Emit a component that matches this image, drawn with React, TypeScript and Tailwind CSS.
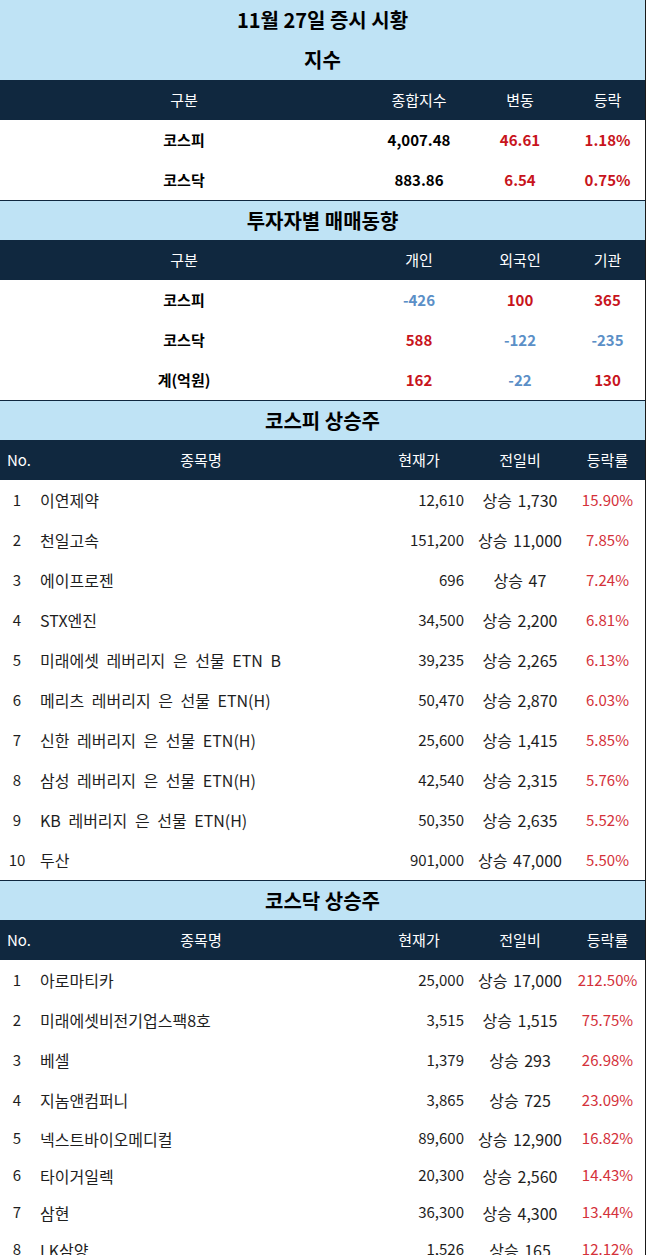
const cols = "grid grid-cols-[34px_334px_102px_100px_75px]";

const indexRows = [
  { name: "코스피", value: "4,007.48", change: "46.61", rate: "1.18%" },
  { name: "코스닥", value: "883.86", change: "6.54", rate: "0.75%" },
];

const investorRows = [
  { name: "코스피", a: "-426", b: "100", c: "365" },
  { name: "코스닥", a: "588", b: "-122", c: "-235" },
  { name: "계(억원)", a: "162", b: "-22", c: "130" },
];

const kospiRows = [
  ["이연제약", "12,610", "상승 1,730", "15.90%"],
  ["천일고속", "151,200", "상승 11,000", "7.85%"],
  ["에이프로젠", "696", "상승 47", "7.24%"],
  ["STX엔진", "34,500", "상승 2,200", "6.81%"],
  ["미래에셋 레버리지 은 선물 ETN B", "39,235", "상승 2,265", "6.13%"],
  ["메리츠 레버리지 은 선물 ETN(H)", "50,470", "상승 2,870", "6.03%"],
  ["신한 레버리지 은 선물 ETN(H)", "25,600", "상승 1,415", "5.85%"],
  ["삼성 레버리지 은 선물 ETN(H)", "42,540", "상승 2,315", "5.76%"],
  ["KB 레버리지 은 선물 ETN(H)", "50,350", "상승 2,635", "5.52%"],
  ["두산", "901,000", "상승 47,000", "5.50%"],
];

const kosdaqRows = [
  ["아로마티카", "25,000", "상승 17,000", "212.50%"],
  ["미래에셋비전기업스팩8호", "3,515", "상승 1,515", "75.75%"],
  ["베셀", "1,379", "상승 293", "26.98%"],
  ["지놈앤컴퍼니", "3,865", "상승 725", "23.09%"],
  ["넥스트바이오메디컬", "89,600", "상승 12,900", "16.82%"],
  ["타이거일렉", "20,300", "상승 2,560", "14.43%"],
  ["삼현", "36,300", "상승 4,300", "13.44%"],
  ["LK삼양", "1,526", "상승 165", "12.12%"],
];

// minus values are blue, the rest red
const tone = (v: string) => (v.startsWith("-") ? "text-[#5b8fc7]" : "text-[#c8141c]");

function Title({ text, top = true }: { text: string; top?: boolean }) {
  return (
    <div
      className={`h-10 flex items-center justify-center bg-[#bfe3f5] text-[20px] font-bold text-black ${
        top ? "border-t border-[#10283f]" : ""
      }`}
    >
      {text}
    </div>
  );
}

function SummaryHead({ labels }: { labels: string[] }) {
  return (
    <div className={`${cols} h-10 items-center bg-[#10283f] text-white text-[15px]`}>
      <div className="col-span-2 text-center">구분</div>
      {labels.map((l) => (
        <div key={l} className="text-center">
          {l}
        </div>
      ))}
    </div>
  );
}

function StockHead() {
  return (
    <div className={`${cols} h-10 items-center bg-[#10283f] text-white text-[15px]`}>
      <div className="pl-[7px]">No.</div>
      <div className="text-center">종목명</div>
      <div className="text-center">현재가</div>
      <div className="text-center">전일비</div>
      <div className="text-center">등락률</div>
    </div>
  );
}

function StockRow({ no, row, tall }: { no: number; row: string[]; tall: boolean }) {
  return (
    <div className={`${cols} ${tall ? "h-10" : "h-[37px]"} items-center text-[15px] text-[#1e1e1e]`}>
      <div className="text-center">{no}</div>
      <div className="pl-[6px] whitespace-nowrap text-[16px] [word-spacing:4px]">{row[0]}</div>
      <div className="text-right pr-[6px]">{row[1]}</div>
      <div className="text-center whitespace-nowrap text-[16px] [word-spacing:2px]">{row[2]}</div>
      <div className="text-center text-[#d4313a]">{row[3]}</div>
    </div>
  );
}

export default function App() {
  return (
    <div
      className="w-[646px] bg-white border-r border-[#1a1a1a] overflow-hidden"
      style={{ fontFamily: '"Noto Sans CJK KR", "Noto Sans", sans-serif' }}
    >
      <Title text="11월 27일 증시 시황" top={false} />
      <Title text="지수" top={false} />
      <SummaryHead labels={["종합지수", "변동", "등락"]} />
      {indexRows.map((r) => (
        <div key={r.name} className={`${cols} h-10 items-center text-[15px] font-bold`}>
          <div className="col-span-2 text-center text-black">{r.name}</div>
          <div className="text-center text-black">{r.value}</div>
          <div className="text-center text-[#c8141c]">{r.change}</div>
          <div className="text-center text-[#c8141c]">{r.rate}</div>
        </div>
      ))}

      <Title text="투자자별 매매동향" />
      <SummaryHead labels={["개인", "외국인", "기관"]} />
      {investorRows.map((r) => (
        <div key={r.name} className={`${cols} h-10 items-center text-[15px] font-bold`}>
          <div className="col-span-2 text-center text-black">{r.name}</div>
          <div className={`text-center ${tone(r.a)}`}>{r.a}</div>
          <div className={`text-center ${tone(r.b)}`}>{r.b}</div>
          <div className={`text-center ${tone(r.c)}`}>{r.c}</div>
        </div>
      ))}

      <Title text="코스피 상승주" />
      <StockHead />
      {kospiRows.map((r, i) => (
        <StockRow key={i} no={i + 1} row={r} tall />
      ))}

      <Title text="코스닥 상승주" />
      <StockHead />
      {kosdaqRows.map((r, i) => (
        <StockRow key={i} no={i + 1} row={r} tall={i < 4} />
      ))}
    </div>
  );
}
